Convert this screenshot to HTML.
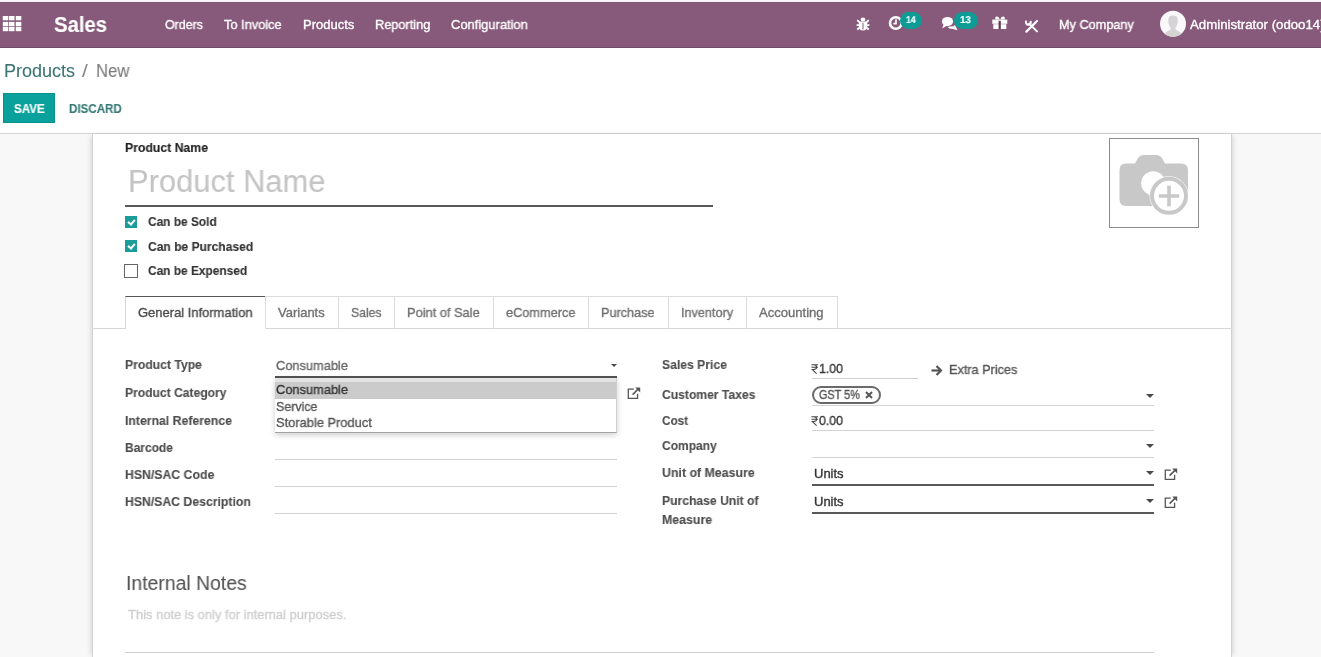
<!DOCTYPE html>
<html><head><meta charset="utf-8"><style>
*{box-sizing:border-box;margin:0;padding:0}
html,body{width:1321px;height:657px;overflow:hidden;background:#fff;font-family:"Liberation Sans",sans-serif}
.ab{position:absolute}
.tx{position:absolute;white-space:nowrap;will-change:transform;-webkit-text-stroke-width:0.35px}
.tx.b{-webkit-text-stroke-width:0.12px}
.tx.big{-webkit-text-stroke-width:0.1px}
.badge{background:#0d9b96;border-radius:9px}
.cbx{width:12px;height:12px;border:1.5px solid #555;background:#fff}
.cbx.on{background:#1a9c98;border-color:#1a9c98}
.cbx.on:after{content:"";position:absolute;left:3.4px;top:1.4px;width:2.8px;height:5px;border:solid #fff;border-width:0 2.2px 2.2px 0;transform:rotate(40deg)}
#top{position:absolute;left:0;top:0;width:1321px;height:2px;background:#fbf3fa}
#nav{position:absolute;left:0;top:2px;width:1321px;height:46px;background:#875a7b;border-top:1px solid #7c5a73;border-bottom:1px solid #6e4c65}
#cp{position:absolute;left:0;top:48px;width:1321px;height:86px;background:#fff;border-bottom:1px solid #d4d4d4}
#bg{position:absolute;left:0;top:134px;width:1321px;height:523px;background:#f8f8f8}
#sheet{position:absolute;left:92px;top:134px;width:1140px;height:523px;background:#fff;border-left:1px solid #d2d2d2;border-right:1px solid #d2d2d2;box-shadow:-3px 0 5px -2px rgba(0,0,0,0.15),3px 0 5px -2px rgba(0,0,0,0.15)}
</style></head><body>
<div id="top"></div><div id="nav"></div><div id="cp"></div><div id="bg"></div><div id="sheet"></div>
<svg class="ab" style="left:0;top:0" width="30" height="40"><rect x="2.8" y="16.0" width="5.5" height="4.3" fill="#fff"/><rect x="2.8" y="21.9" width="5.5" height="4.3" fill="#fff"/><rect x="2.8" y="26.9" width="5.5" height="4.3" fill="#fff"/><rect x="9.0" y="16.0" width="5.5" height="4.3" fill="#fff"/><rect x="9.0" y="21.9" width="5.5" height="4.3" fill="#fff"/><rect x="9.0" y="26.9" width="5.5" height="4.3" fill="#fff"/><rect x="15.8" y="16.0" width="5.5" height="4.3" fill="#fff"/><rect x="15.8" y="21.9" width="5.5" height="4.3" fill="#fff"/><rect x="15.8" y="26.9" width="5.5" height="4.3" fill="#fff"/></svg>
<div class="tx b big" style="left:54.40px;top:10.00px;font-size:22px;line-height:29px;font-weight:bold;color:#ffffff;transform:scaleX(0.9217);transform-origin:0 0;">Sales</div>
<div class="tx" style="left:165.30px;top:16.00px;font-size:13px;line-height:17px;color:#ffffff;transform:scaleX(0.9521);transform-origin:0 0;">Orders</div>
<div class="tx" style="left:224.30px;top:16.00px;font-size:13px;line-height:17px;color:#ffffff;transform:scaleX(0.9846);transform-origin:0 0;">To Invoice</div>
<div class="tx" style="left:303.10px;top:16.00px;font-size:13px;line-height:17px;color:#ffffff;transform:scaleX(0.9961);transform-origin:0 0;">Products</div>
<div class="tx" style="left:374.80px;top:16.00px;font-size:13px;line-height:17px;color:#ffffff;transform:scaleX(0.9805);transform-origin:0 0;">Reporting</div>
<div class="tx" style="left:451.30px;top:16.00px;font-size:13px;line-height:17px;color:#ffffff;transform:scaleX(0.9935);transform-origin:0 0;">Configuration</div>
<div class="tx" style="left:1058.70px;top:16.00px;font-size:13px;line-height:17px;color:#ffffff;transform:scaleX(0.9778);transform-origin:0 0;">My Company</div>
<div class="tx" style="left:1189.60px;top:16.00px;font-size:13px;line-height:17px;color:#ffffff;transform:scaleX(1.0180);transform-origin:0 0;">Administrator (odoo14)</div>
<svg class="ab" style="left:856px;top:17px" width="15" height="14" viewBox="0 0 15 14"><ellipse cx="7" cy="2.6" rx="2.3" ry="2" fill="#fff"/><path d="M2.8 4.4H11.2V9.2Q11.2 13.4 7 13.4Q2.8 13.4 2.8 9.2Z" fill="#fff"/><path d="M1.2 3.2L3.4 5.2M12.8 3.2L10.6 5.2M0.6 8.2H3M13.4 8.2H11M1.2 12.4L3.4 10.8M12.8 12.4L10.6 10.8" stroke="#fff" stroke-width="1.8"/><path d="M7 5.8V12.4" stroke="#8f6a85" stroke-width="1.1"/></svg>
<svg class="ab" style="left:887px;top:14px" width="18" height="18" viewBox="0 0 18 18"><circle cx="8.8" cy="9" r="5.8" fill="none" stroke="#fff" stroke-width="2.6"/><path d="M9 5.3V9.6H6.4" fill="none" stroke="#fff" stroke-width="1.6"/></svg>
<div class="ab badge" style="left:900px;top:11.5px;width:22px;height:17px"></div>
<div class="tx b" style="left:906.20px;top:14.00px;font-size:10px;line-height:13px;font-weight:bold;color:#f0ffff;transform:scaleX(0.8661);transform-origin:0 0;text-rendering:geometricPrecision;-webkit-text-stroke:0.2px #f0ffff;">14</div>
<svg class="ab" style="left:941px;top:16px" width="18" height="16" viewBox="0 0 18 16"><ellipse cx="6.5" cy="5.6" rx="5.6" ry="4.6" fill="#fff"/><path d="M2.5 8.5L1.2 12.5L6 9.6Z" fill="#fff"/><path d="M8 10.5Q12 11 14 9L16.5 14.2L11 12.8Q8.5 13 7 11.5Z" fill="#fff"/></svg>
<div class="ab badge" style="left:953.5px;top:12px;width:24.5px;height:16.5px"></div>
<div class="tx b" style="left:960.20px;top:14.00px;font-size:10px;line-height:13px;font-weight:bold;color:#f0ffff;transform:scaleX(0.9730);transform-origin:0 0;text-rendering:geometricPrecision;-webkit-text-stroke:0.2px #f0ffff;">13</div>
<svg class="ab" style="left:992px;top:16px" width="16" height="14" viewBox="0 0 16 14"><path d="M3.5 3.4Q2.5 0.3 5 0.5Q7 0.8 7.8 3.4Z M12.5 3.4Q13.5 0.3 11 0.5Q9 0.8 8.2 3.4Z" fill="#fff"/><rect x="0.3" y="3.6" width="15" height="4.2" fill="#fff"/><rect x="1.3" y="8.2" width="13" height="4.8" fill="#fff"/><rect x="6.6" y="4.8" width="2.2" height="8.3" fill="#5a3c52"/></svg>
<svg class="ab" style="left:1025px;top:19px" width="14" height="14" viewBox="0 0 14 14"><path d="M1.4 12.6L12 2" stroke="#fff" stroke-width="2.2" stroke-linecap="round"/><path d="M4.2 4.6L12 12.4" stroke="#fff" stroke-width="2" stroke-linecap="round"/><path d="M1 1.6Q0.2 5.6 3.8 5.8Q6.2 5.4 5.6 1.8" fill="none" stroke="#fff" stroke-width="2"/></svg>
<svg class="ab" style="left:1159px;top:10px" width="28" height="28" viewBox="0 0 28 28"><defs><clipPath id="av"><circle cx="14" cy="13.8" r="13"/></clipPath></defs><circle cx="14" cy="13.8" r="13" fill="#fbf8fb"/><g clip-path="url(#av)" fill="#d4d4d4"><path d="M9.3 10Q9.3 5.6 14 5.6Q18.8 5.6 18.8 10Q18.8 15.5 16.5 17.6Q16.2 19.2 17 20Q22.5 21.5 24 28H4Q5.5 21.5 11 20Q11.8 19.2 11.5 17.6Q9.3 15.5 9.3 10Z"/></g></svg>
<div class="tx big" style="left:4.05px;top:60.00px;font-size:18px;line-height:23px;color:#3a7471;transform:scaleX(0.9937);transform-origin:0 0;">Products</div>
<div class="tx big" style="left:82.00px;top:60.00px;font-size:18px;line-height:23px;color:#8a8a8a;transform:scaleX(1.1569);transform-origin:0 0;">/</div>
<div class="tx big" style="left:95.90px;top:60.00px;font-size:18px;line-height:23px;color:#7b7b7b;transform:scaleX(0.9280);transform-origin:0 0;">New</div>
<div class="ab" style="left:3px;top:93px;width:52px;height:30px;background:#0aa19c;border:1px solid #08928d"></div>
<div class="tx b" style="left:13.90px;top:101.00px;font-size:12px;line-height:16px;font-weight:bold;color:#fff;transform:scaleX(0.9686);transform-origin:0 0;">SAVE</div>
<div class="tx b" style="left:68.70px;top:101.00px;font-size:12px;line-height:16px;font-weight:bold;color:#367a77;transform:scaleX(0.9653);transform-origin:0 0;">DISCARD</div>
<div class="tx b" style="left:125.00px;top:139.00px;font-size:13px;line-height:17px;font-weight:bold;color:#222;transform:scaleX(0.9421);transform-origin:0 0;">Product Name</div>
<div class="tx big" style="left:128.30px;top:162.00px;font-size:31px;line-height:40px;color:#c4c4c4;transform:scaleX(0.9965);transform-origin:0 0;">Product Name</div>
<div class="ab" style="left:125px;top:205px;width:588px;height:2px;background:#585858"></div>
<div class="ab cbx on" style="left:125px;top:216px"></div>
<div class="ab cbx on" style="left:125px;top:240px"></div>
<div class="ab cbx" style="left:124px;top:264px;width:14px;height:14px;border:1.6px solid #666"></div>
<div class="tx b" style="left:148.00px;top:213.00px;font-size:13px;line-height:17px;font-weight:bold;color:#333;transform:scaleX(0.9148);transform-origin:0 0;">Can be Sold</div>
<div class="tx b" style="left:148.00px;top:238.00px;font-size:13px;line-height:17px;font-weight:bold;color:#333;transform:scaleX(0.9277);transform-origin:0 0;">Can be Purchased</div>
<div class="tx b" style="left:148.00px;top:262.00px;font-size:13px;line-height:17px;font-weight:bold;color:#333;transform:scaleX(0.9151);transform-origin:0 0;">Can be Expensed</div>
<div class="ab" style="left:1109px;top:138px;width:90px;height:90px;border:1px solid #8c8c8c"></div>
<svg class="ab" style="left:1119px;top:154px" width="71" height="62" viewBox="0 0 71 62"><path d="M0.5 16Q0.5 9.5 7 9.5H16L19 4Q21 1 25 1H37Q41 1 43 4L46 9.5H62Q69 9.5 69 16V45Q69 52 62 52H7Q0.5 52 0.5 45Z" fill="#c8c8c8"/><circle cx="34.2" cy="29.3" r="12" fill="#fff"/><circle cx="50" cy="41.8" r="19.5" fill="#fff"/><circle cx="50" cy="41.8" r="17" fill="none" stroke="#c8c8c8" stroke-width="4"/><path d="M50 31.8V52.2M39.8 42H60.2" stroke="#c8c8c8" stroke-width="3.6"/></svg>
<div class="ab" style="left:92px;top:328px;width:1140px;height:1px;background:#d6d6d6"></div>
<div class="ab" style="left:125px;top:296px;width:141px;height:33px;background:#fff;border:1px solid #d6d6d6;border-top:1px solid #555;border-bottom:none"></div>
<div class="tx" style="left:138.00px;top:304.00px;font-size:13px;line-height:17px;color:#4a4a4a;transform:scaleX(0.9965);transform-origin:0 0;">General Information</div>
<div class="ab" style="left:265px;top:296px;width:74px;height:33px;border:1px solid #dcdcdc;border-bottom:none"></div>
<div class="tx" style="left:277.90px;top:304.00px;font-size:13px;line-height:17px;color:#707070;transform:scaleX(0.9979);transform-origin:0 0;">Variants</div>
<div class="ab" style="left:338px;top:296px;width:57px;height:33px;border:1px solid #dcdcdc;border-bottom:none"></div>
<div class="tx" style="left:350.60px;top:304.00px;font-size:13px;line-height:17px;color:#707070;transform:scaleX(0.9385);transform-origin:0 0;">Sales</div>
<div class="ab" style="left:394px;top:296px;width:100px;height:33px;border:1px solid #dcdcdc;border-bottom:none"></div>
<div class="tx" style="left:407.40px;top:304.00px;font-size:13px;line-height:17px;color:#707070;transform:scaleX(0.9864);transform-origin:0 0;">Point of Sale</div>
<div class="ab" style="left:493px;top:296px;width:96px;height:33px;border:1px solid #dcdcdc;border-bottom:none"></div>
<div class="tx" style="left:505.50px;top:304.00px;font-size:13px;line-height:17px;color:#707070;transform:scaleX(0.9816);transform-origin:0 0;">eCommerce</div>
<div class="ab" style="left:588px;top:296px;width:81px;height:33px;border:1px solid #dcdcdc;border-bottom:none"></div>
<div class="tx" style="left:600.90px;top:304.00px;font-size:13px;line-height:17px;color:#707070;transform:scaleX(0.9727);transform-origin:0 0;">Purchase</div>
<div class="ab" style="left:668px;top:296px;width:79px;height:33px;border:1px solid #dcdcdc;border-bottom:none"></div>
<div class="tx" style="left:680.60px;top:304.00px;font-size:13px;line-height:17px;color:#707070;transform:scaleX(0.9738);transform-origin:0 0;">Inventory</div>
<div class="ab" style="left:746px;top:296px;width:92px;height:33px;border:1px solid #dcdcdc;border-bottom:none"></div>
<div class="tx" style="left:758.60px;top:304.00px;font-size:13px;line-height:17px;color:#707070;transform:scaleX(1.0047);transform-origin:0 0;">Accounting</div>
<div class="tx b" style="left:124.90px;top:356.00px;font-size:13px;line-height:17px;font-weight:bold;color:#4e4e4e;transform:scaleX(0.9367);transform-origin:0 0;">Product Type</div>
<div class="tx b" style="left:124.90px;top:384.00px;font-size:13px;line-height:17px;font-weight:bold;color:#4e4e4e;transform:scaleX(0.9303);transform-origin:0 0;">Product Category</div>
<div class="tx b" style="left:124.90px;top:412.00px;font-size:13px;line-height:17px;font-weight:bold;color:#4e4e4e;transform:scaleX(0.9427);transform-origin:0 0;">Internal Reference</div>
<div class="tx b" style="left:124.90px;top:439.00px;font-size:13px;line-height:17px;font-weight:bold;color:#4e4e4e;transform:scaleX(0.9212);transform-origin:0 0;">Barcode</div>
<div class="tx b" style="left:124.90px;top:466.00px;font-size:13px;line-height:17px;font-weight:bold;color:#4e4e4e;transform:scaleX(0.9440);transform-origin:0 0;">HSN/SAC Code</div>
<div class="tx b" style="left:124.90px;top:493.00px;font-size:13px;line-height:17px;font-weight:bold;color:#4e4e4e;transform:scaleX(0.9416);transform-origin:0 0;">HSN/SAC Description</div>
<div class="tx" style="left:276.00px;top:357.00px;font-size:13px;line-height:17px;color:#666;transform:scaleX(0.9863);transform-origin:0 0;">Consumable</div>
<div class="ab" style="left:275px;top:376px;width:342px;height:2px;background:#555"></div>
<svg class="ab" style="left:611px;top:364px" width="7" height="4"><path d="M0 0H6L3 3Z" fill="#4a4a4a"/></svg>
<div class="ab" style="left:275px;top:459px;width:342px;height:1px;background:#d3d3d3"></div>
<div class="ab" style="left:275px;top:486px;width:342px;height:1px;background:#d3d3d3"></div>
<div class="ab" style="left:275px;top:513px;width:342px;height:1px;background:#d3d3d3"></div>
<svg class="ab" style="left:626.5px;top:387.0px" width="14" height="13" viewBox="0 0 14 13"><path d="M6.8 2.2H1.3V11.4H10.6V6.8" fill="none" stroke="#555" stroke-width="1.3"/><path d="M5.6 7.6L11.6 1.6" stroke="#555" stroke-width="1.5"/><path d="M8.2 0.4H13.2V5.4Z" fill="#555"/></svg>
<div class="ab" style="left:275px;top:378px;width:342px;height:55px;background:#fff;box-shadow:0px 2px 6px rgba(0,0,0,0.2);border-top:none;border-right:1px solid #d0d0d0;border-bottom:1px solid #a2a2a2"></div>
<div class="ab" style="left:275px;top:378px;width:341px;height:4px;background:#e4e4e4"></div>
<div class="ab" style="left:275px;top:382px;width:341px;height:17px;background:#cbcbcb"></div>
<div class="tx" style="left:276.40px;top:381.00px;font-size:13px;line-height:17px;color:#333;transform:scaleX(0.9877);transform-origin:0 0;">Consumable</div>
<div class="tx" style="left:276.40px;top:398.00px;font-size:13px;line-height:17px;color:#555;transform:scaleX(0.9561);transform-origin:0 0;">Service</div>
<div class="tx" style="left:276.40px;top:414.00px;font-size:13px;line-height:17px;color:#555;transform:scaleX(0.9897);transform-origin:0 0;">Storable Product</div>
<div class="tx b" style="left:661.90px;top:356.00px;font-size:13px;line-height:17px;font-weight:bold;color:#4e4e4e;transform:scaleX(0.9352);transform-origin:0 0;">Sales Price</div>
<div class="tx b" style="left:661.90px;top:386.00px;font-size:13px;line-height:17px;font-weight:bold;color:#4e4e4e;transform:scaleX(0.9321);transform-origin:0 0;">Customer Taxes</div>
<div class="tx b" style="left:661.90px;top:412.00px;font-size:13px;line-height:17px;font-weight:bold;color:#4e4e4e;transform:scaleX(0.9031);transform-origin:0 0;">Cost</div>
<div class="tx b" style="left:661.90px;top:437.00px;font-size:13px;line-height:17px;font-weight:bold;color:#4e4e4e;transform:scaleX(0.9240);transform-origin:0 0;">Company</div>
<div class="tx b" style="left:661.90px;top:464.00px;font-size:13px;line-height:17px;font-weight:bold;color:#4e4e4e;transform:scaleX(0.9508);transform-origin:0 0;">Unit of Measure</div>
<div class="tx b" style="left:661.90px;top:492.00px;font-size:13px;line-height:17px;font-weight:bold;color:#4e4e4e;transform:scaleX(0.9342);transform-origin:0 0;">Purchase Unit of</div>
<div class="tx b" style="left:661.90px;top:511.00px;font-size:13px;line-height:17px;font-weight:bold;color:#4e4e4e;transform:scaleX(0.9507);transform-origin:0 0;">Measure</div>
<svg class="ab" style="left:811.2px;top:363.6px" width="8" height="10" viewBox="0 0 8 10"><path d="M0.4 0.8H7M0.4 3.3H7M1.2 0.8H2.8Q5.6 0.8 5.6 3.2Q5.6 5.4 2.6 5.4H1.2L5.6 9.6" fill="none" stroke="#444" stroke-width="1.05"/></svg>
<div class="tx" style="left:819.20px;top:360.00px;font-size:13px;line-height:17px;color:#333;transform:scaleX(0.9486);transform-origin:0 0;">1.00</div>
<div class="ab" style="left:812px;top:378px;width:106px;height:1px;background:#cfcfcf"></div>
<svg class="ab" style="left:931.0px;top:365.0px" width="12" height="11" viewBox="0 0 12 11"><path d="M0.5 5.5H9" stroke="#555" stroke-width="2.2"/><path d="M5.5 1L10 5.5L5.5 10" fill="none" stroke="#555" stroke-width="2.2"/></svg>
<div class="tx" style="left:948.90px;top:361.00px;font-size:13px;line-height:17px;color:#555;transform:scaleX(0.9757);transform-origin:0 0;">Extra Prices</div>
<div class="ab" style="left:812px;top:386px;width:69px;height:18px;border:2px solid #6a6a6a;border-radius:9px"></div>
<div class="tx" style="left:819.20px;top:387.00px;font-size:12px;line-height:16px;color:#555;transform:scaleX(0.9047);transform-origin:0 0;">GST 5%</div>
<svg class="ab" style="left:865.3px;top:391.2px" width="8" height="8" viewBox="0 0 8 8"><path d="M1 1L7 7M7 1L1 7" stroke="#555" stroke-width="2"/></svg>
<div class="ab" style="left:812px;top:405px;width:342px;height:1px;background:#d3d3d3"></div>
<svg class="ab" style="left:1145.5px;top:393.5px" width="9" height="5"><path d="M0 0H8L4 4Z" fill="#4a4a4a"/></svg>
<svg class="ab" style="left:811.2px;top:415.6px" width="8" height="10" viewBox="0 0 8 10"><path d="M0.4 0.8H7M0.4 3.3H7M1.2 0.8H2.8Q5.6 0.8 5.6 3.2Q5.6 5.4 2.6 5.4H1.2L5.6 9.6" fill="none" stroke="#444" stroke-width="1.05"/></svg>
<div class="tx" style="left:819.20px;top:412.00px;font-size:13px;line-height:17px;color:#333;transform:scaleX(0.9486);transform-origin:0 0;">0.00</div>
<div class="ab" style="left:812px;top:430px;width:342px;height:1px;background:#d3d3d3"></div>
<svg class="ab" style="left:1145.5px;top:444.0px" width="9" height="5"><path d="M0 0H8L4 4Z" fill="#4a4a4a"/></svg>
<div class="ab" style="left:812px;top:457px;width:342px;height:1px;background:#d3d3d3"></div>
<div class="tx" style="left:813.70px;top:465.00px;font-size:13px;line-height:17px;color:#333;transform:scaleX(0.9865);transform-origin:0 0;">Units</div>
<div class="ab" style="left:812px;top:484px;width:342px;height:2px;background:#585858"></div>
<svg class="ab" style="left:1145.5px;top:471.3px" width="9" height="5"><path d="M0 0H8L4 4Z" fill="#4a4a4a"/></svg>
<svg class="ab" style="left:1163.8px;top:467.5px" width="14" height="13" viewBox="0 0 14 13"><path d="M6.8 2.2H1.3V11.4H10.6V6.8" fill="none" stroke="#555" stroke-width="1.3"/><path d="M5.6 7.6L11.6 1.6" stroke="#555" stroke-width="1.5"/><path d="M8.2 0.4H13.2V5.4Z" fill="#555"/></svg>
<div class="tx" style="left:813.70px;top:493.00px;font-size:13px;line-height:17px;color:#333;transform:scaleX(0.9865);transform-origin:0 0;">Units</div>
<div class="ab" style="left:812px;top:512px;width:342px;height:2px;background:#585858"></div>
<svg class="ab" style="left:1145.5px;top:499.0px" width="9" height="5"><path d="M0 0H8L4 4Z" fill="#4a4a4a"/></svg>
<svg class="ab" style="left:1163.8px;top:495.5px" width="14" height="13" viewBox="0 0 14 13"><path d="M6.8 2.2H1.3V11.4H10.6V6.8" fill="none" stroke="#555" stroke-width="1.3"/><path d="M5.6 7.6L11.6 1.6" stroke="#555" stroke-width="1.5"/><path d="M8.2 0.4H13.2V5.4Z" fill="#555"/></svg>
<div class="tx big" style="left:125.50px;top:570.00px;font-size:20px;line-height:26px;color:#555;transform:scaleX(0.9695);transform-origin:0 0;">Internal Notes</div>
<div class="tx" style="left:127.70px;top:606.00px;font-size:13px;line-height:17px;color:#cfcfcf;transform:scaleX(0.9941);transform-origin:0 0;">This note is only for internal purposes.</div>
<div class="ab" style="left:125px;top:652px;width:1029px;height:1px;background:#d0d0d0"></div>
</body></html>
